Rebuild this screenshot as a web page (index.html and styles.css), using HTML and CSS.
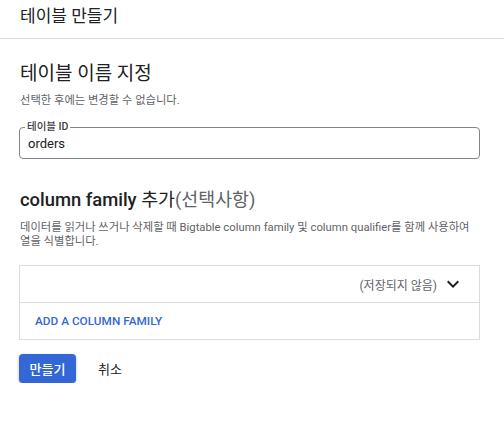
FILE: index.html
```html
<!DOCTYPE html>
<html lang="ko">
<head>
<meta charset="utf-8">
<link rel="stylesheet" href="styles.css">
</head>
<body>
<header class="topbar">테이블 만들기</header>
<main class="content">
  <h2 class="section-title">테이블 이름 지정</h2>
  <p class="hint">선택한 후에는 변경할 수 없습니다.</p>
  <div class="field">
    <span class="field-label">테이블 ID</span>
    <div class="field-value">orders</div>
  </div>
  <h2 class="section-title cf-title"><b class="en">column family</b> 추가<span class="optional">(선택사항)</span></h2>
  <p class="hint desc">데이터를 읽거나 쓰거나 삭제할 때 Bigtable column family 및 column qualifier를 함께 사용하여 열을 식별합니다.</p>
  <div class="cf-box">
    <div class="cf-row">
      <span class="unsaved">(저장되지 않음)</span>
      <svg class="chev" width="12" height="8" viewBox="0 0 12 8"><path d="M1.4 0.6 L6 5.2 L10.6 0.6 L12 2 L6 8 L0 2 Z" fill="#202124"/></svg>
    </div>
    <div class="cf-add">ADD A COLUMN FAMILY</div>
  </div>
  <div class="actions">
    <button class="btn-primary">만들기</button>
    <button class="btn-text">취소</button>
  </div>
</main>
</body>
</html>
```
FILE: styles.css
```css
html, body {
  margin: 0;
  padding: 0;
  background: #fff;
  color: #202124;
  font-family: Roboto, "Noto Sans CJK KR", sans-serif;
}
.topbar {
  height: 39px;
  box-sizing: border-box;
  border-bottom: 1px solid #dadce0;
  padding: 5px 0 0 20px;
  font-size: 17px;
  line-height: 22px;
}
.content {
  padding: 0 24px 0 19px;
}
.section-title {
  margin: 22px 0 0 1px;
  font-size: 19px;
  font-weight: 400;
  line-height: 26px;
}
.hint {
  margin: 7px 0 0 1px;
  font-size: 11.3px;
  line-height: 14px;
  color: #5f6368;
}
.field {
  position: relative;
  margin-top: 19px;
  height: 32px;
  box-sizing: border-box;
  border: 1px solid #80868b;
  border-radius: 4px;
  padding: 8px 8px 0 8px;
}
.field-label {
  position: absolute;
  top: -7px;
  left: 5px;
  padding: 0 2px;
  background: #fff;
  font-size: 10.5px;
  font-weight: 500;
  line-height: 12px;
  color: #3c4043;
}
.field-value {
  font-size: 13px;
  line-height: 16px;
}
.cf-title {
  margin-top: 28px;
  font-size: 18.4px;
}
.en {
  font-weight: 500;
}
.optional {
  color: #5f6368;
}
.desc {
  margin-top: 8px;
}
.cf-box {
  margin-top: 16px;
  border: 1px solid #dadce0;
}
.cf-row {
  height: 36px;
  border-bottom: 1px solid #dadce0;
  display: flex;
  align-items: center;
  justify-content: flex-end;
  gap: 10px;
  padding-right: 20px;
}
.unsaved {
  font-size: 12px;
  color: #5f6368;
}
.cf-add {
  height: 36px;
  display: flex;
  align-items: center;
  padding-left: 15px;
  font-size: 11.8px;
  font-weight: 500;
  color: #3367d6;
}
.actions {
  margin-top: 14px;
  display: flex;
  align-items: center;
  gap: 8px;
}
.btn-primary {
  height: 29px;
  width: 57px;
  border: none;
  border-radius: 4px;
  background: #3367d6;
  color: #fff;
  font-family: inherit;
  font-size: 13px;
  font-weight: 500;
  box-shadow: 0 1px 3px rgba(0,0,0,0.3);
  padding: 0;
}
.btn-text {
  background: none;
  border: none;
  font-family: inherit;
  font-size: 13px;
  color: #202124;
  padding: 0 14px;
}
```
